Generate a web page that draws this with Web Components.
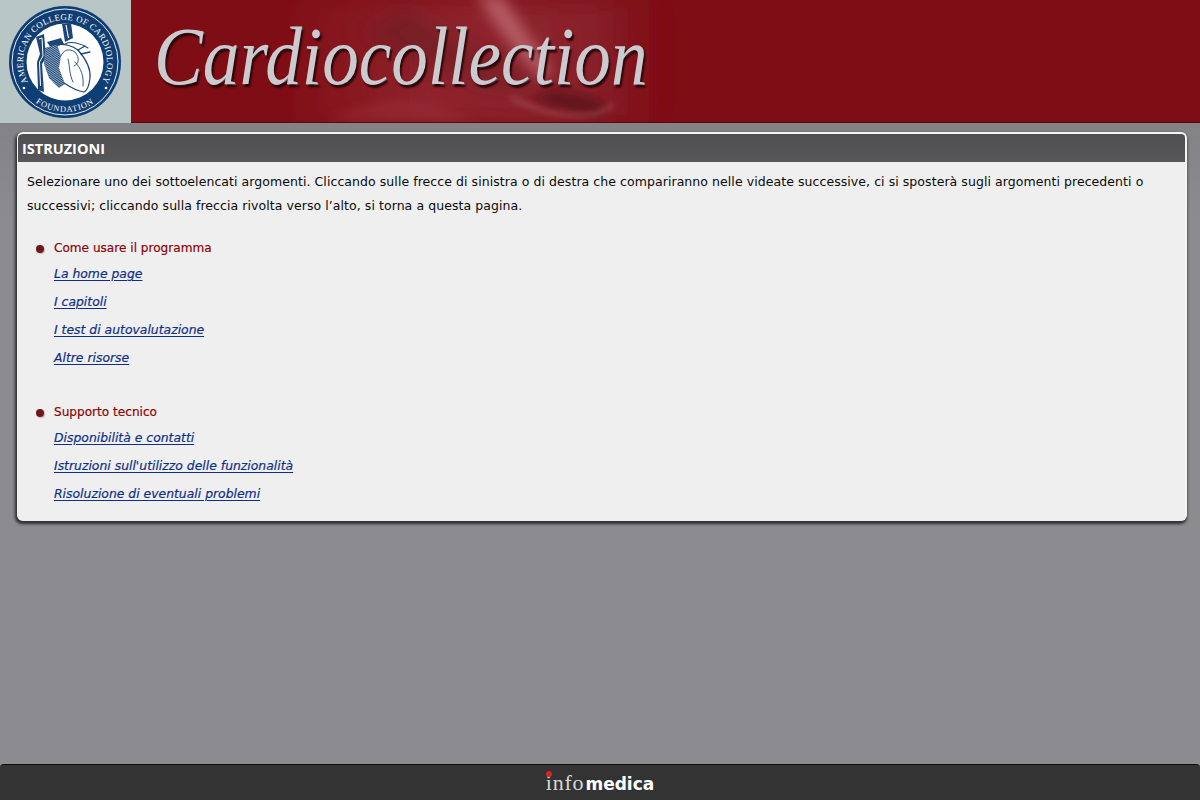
<!DOCTYPE html>
<html lang="it">
<head>
<meta charset="utf-8">
<title>Cardiocollection - Istruzioni</title>
<style>
  html, body { height: 100%; }
  body {
    margin: 0;
    height: 800px;
    overflow: hidden;
    display: flex;
    flex-direction: column;
    font-family: "DejaVu Sans", "Noto Sans", sans-serif;
    background: linear-gradient(to bottom, #77777b 0, #8c8c90 220px, #8c8c90 100%);
  }
</style>
</head>
<body>
<app-banner title-text="Cardiocollection"></app-banner>
<info-panel heading="ISTRUZIONI">
  <p>Selezionare uno dei sottoelencati argomenti. Cliccando sulle frecce di sinistra o di destra che compariranno nelle videate successive, ci si sposterà sugli argomenti precedenti o successivi; cliccando sulla freccia rivolta verso l’alto, si torna a questa pagina.</p>
  <topic-list heading="Come usare il programma">
    <a href="#">La home page</a>
    <a href="#">I capitoli</a>
    <a href="#">I test di autovalutazione</a>
    <a href="#">Altre risorse</a>
  </topic-list>
  <topic-list heading="Supporto tecnico">
    <a href="#">Disponibilità e contatti</a>
    <a href="#">Istruzioni sull'utilizzo delle funzionalità</a>
    <a href="#">Risoluzione di eventuali problemi</a>
  </topic-list>
</info-panel>
<app-footer></app-footer>

<script>
// banner with the seal on the left and the red swirl behind the title
class AppBanner extends HTMLElement {
  constructor() {
    super();
    const shadowRoot = this.attachShadow({mode:'open'});
    shadowRoot.innerHTML = `
    <style>
      :host { display: flex; height: 123px; flex: none; background: #7f0d15; }
      .seal { width: 131px; flex: none; background: #b9c6c6; display: flex; align-items: center; padding-left: 9px; box-sizing: border-box; }
      .art { flex: 1; position: relative; overflow: hidden; display: flex; align-items: center; padding-left: 23px; border-bottom: 1px solid #5c0a10; }
      .swirl { position: absolute; left: 0; top: 0; width: 1069px; height: 123px; }
      h1 {
        position: relative;
        margin: -8px 0 0;
        font: italic 400 82px/1 "Liberation Serif", serif;
        white-space: nowrap;
        color: #cbcbcf;
        text-shadow: 2px 3px 2px #2c0508, 1px 1px 0 #6f6f72;
        transform: scaleX(.893);
        transform-origin: left center;
      }
    </style>
    <div class="seal"><acc-seal></acc-seal></div>
    <div class="art">
      <svg class="swirl" viewBox="0 0 1069 123">
        <defs>
          <linearGradient id="fade" x1="0" x2="1">
            <stop offset="0" stop-color="#a8404a" stop-opacity="0"/>
            <stop offset=".4" stop-color="#a03a44" stop-opacity=".5"/>
            <stop offset=".8" stop-color="#8c2b35" stop-opacity=".65"/>
            <stop offset="1" stop-color="#7f0d15" stop-opacity="0"/>
          </linearGradient>
          <filter id="b12" x="-30%" y="-60%" width="160%" height="220%"><feGaussianBlur stdDeviation="12"/></filter>
          <filter id="b7" x="-60%" y="-60%" width="220%" height="220%"><feGaussianBlur stdDeviation="7"/></filter>
          <filter id="b5" x="-30%" y="-60%" width="160%" height="220%"><feGaussianBlur stdDeviation="5"/></filter>
          <filter id="b3" x="-30%" y="-60%" width="160%" height="220%"><feGaussianBlur stdDeviation="3"/></filter>
        </defs>
        <path d="M170 0H545V123H150C190 90 120 40 170 0Z" fill="url(#fade)" filter="url(#b12)"/>
        <path d="M280 10C320 40 370 70 420 85C370 95 300 70 230 30Z" fill="#5f1a22" opacity=".5" filter="url(#b12)"/>
        <path d="M345 -5C365 25 385 55 410 78L422 72C405 45 385 20 372 -5Z" fill="#d68a92" opacity=".55" filter="url(#b7)"/>
        <path d="M420 90C450 92 480 100 475 112C455 122 430 108 400 100Z" fill="#4e0d14" opacity=".6" filter="url(#b5)"/>
        <path d="M380 98C420 118 465 122 482 104" fill="none" stroke="#c57d85" stroke-width="3" opacity=".55" filter="url(#b3)"/>
        <path d="M190 122C230 104 260 96 300 104L350 123Z" fill="#a63c47" opacity=".3" filter="url(#b5)"/>
      </svg>
      <h1></h1>
    </div>`;
    shadowRoot.querySelector('h1').textContent = this.getAttribute('title-text');
  }
}
customElements.define('app-banner', AppBanner);

// round seal of the foundation, lettering runs along textPath
class AccSeal extends HTMLElement {
  constructor() {
    super();
    const shadowRoot = this.attachShadow({mode:'open'});
    shadowRoot.innerHTML = `
    <style>
      :host { display: block; width: 112px; height: 112px; }
      svg { display: block; }
      text { font-family: "Liberation Serif", serif; fill: #fff; }
    </style>
    <svg width="112" height="112" viewBox="0 0 112 112">
      <defs>
        <path id="upper" d="M20 77.6A42 42 0 1 1 92 77.6"/>
        <path id="lower" d="M23 93.5A50 50 0 0 0 89 93.5"/>
        <pattern id="hatch" width="1.8" height="1.8" patternUnits="userSpaceOnUse" patternTransform="rotate(35)">
          <rect width="1.8" height="1.8" fill="#1b4677"/>
          <rect width="1.8" height=".6" fill="#fff" opacity=".8"/>
        </pattern>
      </defs>
      <circle cx="56" cy="56" r="56" fill="#0f3e74"/>
      <circle cx="56" cy="56" r="53" fill="none" stroke="#fff" stroke-width=".9"/>
      <circle cx="56" cy="56" r="38.5" fill="#fff"/>
      <text font-size="8.8" letter-spacing=".35"><textPath href="#upper" startOffset="50%" text-anchor="middle">AMERICAN COLLEGE OF CARDIOLOGY</textPath></text>
      <text font-size="8.3" letter-spacing=".9"><textPath href="#lower" startOffset="50%" text-anchor="middle">FOUNDATION</textPath></text>
      <circle cx="15" cy="82" r="1.3" fill="#fff"/>
      <circle cx="97" cy="82" r="1.3" fill="#fff"/>
      <!-- vessels -->
      <path d="M27 31L35 28L37 52L33 58L35 86L29 84L28 56L31 48Z" fill="#1b4677"/>
      <path d="M30 33L33 32L34 50L30.5 56L31.5 80" fill="none" stroke="#fff" stroke-width="1"/>
      <path d="M53 18L62 17L64 32L56 36Z" fill="#1b4677"/>
      <path d="M57 19L59.5 32" stroke="#fff" stroke-width="1.1" fill="none"/>
      <path d="M38 36L52 32L55 38L42 42Z" fill="#1b4677"/>
      <!-- heart -->
      <path d="M36 42L48 38L52 50L50 62L56 78L50 82L40 72L35 58Z" fill="url(#hatch)"/>
      <g fill="none" stroke="#1b4677" stroke-linecap="round">
        <path d="M47 39C55 37 64 40 69 44C76 52 82 62 81 72C80 80 78 85 75 86C68 85 61 81 55 77" stroke-width="1.2"/>
        <path d="M52 50C54 44 60 42 66 46C71 52 70 58 65 60" stroke-width=".9"/>
        <path d="M59 53C61 60 60 68 64 76" stroke-width=".9"/>
        <path d="M66 56C72 62 75 70 74 80" stroke-width=".9"/>
        <path d="M56 38C62 35 72 37 79 42" stroke-width="1.1"/>
        <path d="M69 44L76 40M72 48L81 46" stroke-width="1.3"/>
      </g>
    </svg>`;
  }
}
customElements.define('acc-seal', AccSeal);

// white edged box with dark title bar
class InfoPanel extends HTMLElement {
  constructor() {
    super();
    const shadowRoot = this.attachShadow({mode:'open'});
    shadowRoot.innerHTML = `
    <style>
      :host {
        display: block;
        flex: none;
        margin: 9px 13px 0 17px;
        height: 389px;
        box-sizing: border-box;
        background: #efefef;
        border: 2px solid #f4f4f4;
        border-width: 2px 2px 0 1px;
        border-radius: 6px;
        box-shadow: -1px 2px 3px 1px #2e2e30;
        overflow: hidden;
        font-family: "DejaVu Sans", "Noto Sans", sans-serif;
      }
      h2 {
        margin: 0;
        height: 28px;
        padding-left: 4px;
        background: linear-gradient(#4f4f51, #575759);
        color: #fff;
        font: 700 14.5px/29px "Open Sans", "Noto Sans", sans-serif;
      }
      .body { padding: 8px 9px 0; }
      ::slotted(p) {
        margin: 0 0 17px;
        font-size: 12.5px;
        line-height: 24px;
        letter-spacing: .065px;
        color: #0a0a0a;
      }
    </style>
    <h2></h2>
    <div class="body"><slot></slot></div>`;
    shadowRoot.querySelector('h2').textContent = this.getAttribute('heading');
  }
}
customElements.define('info-panel', InfoPanel);

// bullet heading followed by its column of links
class TopicList extends HTMLElement {
  constructor() {
    super();
    const shadowRoot = this.attachShadow({mode:'open'});
    shadowRoot.innerHTML = `
    <style>
      :host { display: block; padding-left: 27px; margin-bottom: 27px; }
      h3 {
        position: relative;
        margin: 0;
        padding-top: 1px;
        font: 400 12.1px/24px "DejaVu Sans", "Noto Sans", sans-serif;
        -webkit-text-stroke: .2px;
        color: #8a0508;
      }
      h3::before {
        content: "";
        position: absolute;
        left: -18px;
        top: 10px;
        width: 8px;
        height: 8px;
        border-radius: 50%;
        background: #6f161d;
        box-shadow: 1px 1px 1px #c8b4b4;
      }
      .links { display: flex; flex-direction: column; align-items: flex-start; }
      ::slotted(a) {
        font: italic 400 12.4px/28px "DejaVu Sans", "Noto Sans", sans-serif;
        -webkit-text-stroke: .2px;
        color: #0f2f86;
        text-underline-offset: 2px;
      }
    </style>
    <h3></h3>
    <div class="links"><slot></slot></div>`;
    shadowRoot.querySelector('h3').textContent = this.getAttribute('heading');
  }
}
customElements.define('topic-list', TopicList);

// dark strip at the bottom with the publisher mark
class AppFooter extends HTMLElement {
  constructor() {
    super();
    const shadowRoot = this.attachShadow({mode:'open'});
    shadowRoot.innerHTML = `
    <style>
      :host {
        display: flex;
        align-items: center;
        justify-content: center;
        box-sizing: border-box;
        height: 36px;
        margin-top: auto;
        flex: none;
        background: #333;
        border-top: 1px solid #0c0c0c;
        border-radius: 4px 4px 0 0;
        color: #fff;
      }
      .mark { position: relative; display: flex; align-items: baseline; margin-top: 1px; }
      .info { font: 400 22px/1 "Liberation Serif", serif; letter-spacing: .8px; color: #d8d8d8; }
      .medica { font: 700 17px/1 "DejaVu Sans", sans-serif; margin-left: 1px; }
      .dot { position: absolute; left: 0; top: -1px; width: 6px; height: 6px; border-radius: 50%; background: #d8202f; }
    </style>
    <div class="mark"><i class="dot"></i><span class="info">info</span><span class="medica">medica</span></div>`;
  }
}
customElements.define('app-footer', AppFooter);
</script>
</body>
</html>
